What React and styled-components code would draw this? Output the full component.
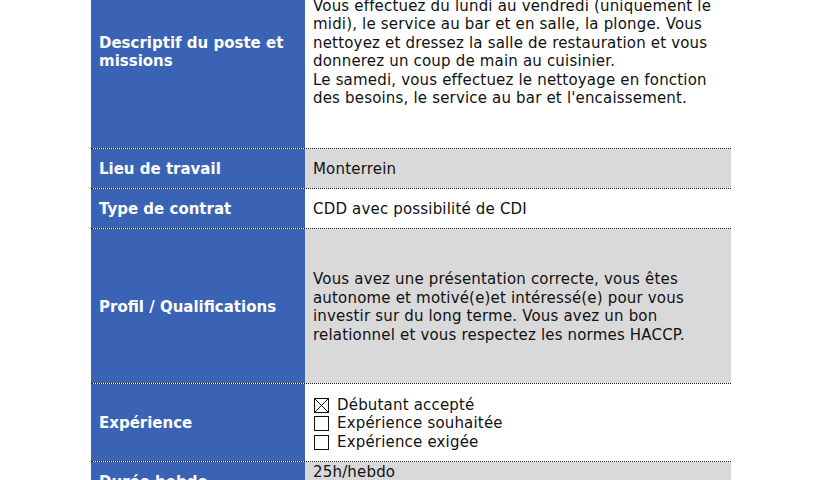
import React from 'react';
import styled, { createGlobalStyle } from 'styled-components';

const GlobalStyle = createGlobalStyle`
  html, body {
    margin: 0;
    padding: 0;
    background: #ffffff;
    overflow: hidden;
  }
  body {
    font-family: 'DejaVu Sans', Verdana, sans-serif;
  }
`;

const Sheet = styled.div`
  width: 640px;
  margin: -46px 0 0 91px;
`;

const Row = styled.div`
  display: grid;
  grid-template-columns: 214px 426px;
  height: ${({ h }) => h}px;
  box-sizing: border-box;
  border-top: ${({ first }) => (first ? 'none' : '1px dotted #1a1a1a')};
`;

const Label = styled.div`
  background: #3a63b6;
  color: #ffffff;
  font-weight: bold;
  font-size: 15px;
  line-height: 18.5px;
  display: flex;
  align-items: center;
  padding: 2px 8px 0;
`;

const Value = styled.div`
  background: ${({ shade }) => (shade ? '#d9d9d9' : '#ffffff')};
  color: #111111;
  font-size: 15px;
  line-height: 18.5px;
  letter-spacing: 0.18px;
  display: flex;
  align-items: ${({ top }) => (top ? 'flex-start' : 'center')};
  padding: ${({ top }) => (top ? '1px 8px 0' : '2px 8px 0')};
  white-space: nowrap;
`;

const Lines = styled.div`
  display: flex;
  flex-direction: column;
`;

const Choice = styled.div`
  display: flex;
  align-items: center;
  gap: 8px;
`;

const Box = styled.span`
  width: 15px;
  height: 15px;
  border: 1px solid #111;
  box-sizing: border-box;
  display: inline-flex;
  margin-left: 1px;
`;

const CheckBox = ({ checked }) => (
  <Box>
    {checked && (
      <svg width="13" height="13" viewBox="0 0 13 13">
        <path d="M0 0 L13 13 M13 0 L0 13" stroke="#111" strokeWidth="1" />
      </svg>
    )}
  </Box>
);

const rows = [
  {
    label: ['Descriptif du poste et', 'missions'],
    h: 194,
    value: [
      'Vous effectuez du lundi au vendredi (uniquement le',
      'midi), le service au bar et en salle, la plonge. Vous',
      'nettoyez et dressez la salle de restauration et vous',
      'donnerez un coup de main au cuisinier.',
      'Le samedi, vous effectuez le nettoyage en fonction',
      "des besoins, le service au bar et l'encaissement.",
    ],
  },
  { label: ['Lieu de travail'], h: 40, value: ['Monterrein'] },
  { label: ['Type de contrat'], h: 40, value: ['CDD avec possibilité de CDI'] },
  {
    label: ['Profil / Qualifications'],
    h: 155,
    value: [
      'Vous avez une présentation correcte, vous êtes',
      'autonome et motivé(e)et intéressé(e) pour vous',
      'investir sur du long terme. Vous avez un bon',
      'relationnel et vous respectez les normes HACCP.',
    ],
  },
];

const choices = [
  { text: 'Débutant accepté', checked: true },
  { text: 'Expérience souhaitée', checked: false },
  { text: 'Expérience exigée', checked: false },
];

export default function App() {
  return (
    <>
      <GlobalStyle />
      <Sheet>
        {rows.map((r, i) => (
          <Row key={r.label[0]} h={r.h} first={i === 0}>
            <Label>
              <Lines>
                {r.label.map((l) => (
                  <span key={l}>{l}</span>
                ))}
              </Lines>
            </Label>
            <Value shade={i % 2 === 1}>
              <Lines>
                {r.value.map((l) => (
                  <span key={l}>{l}</span>
                ))}
              </Lines>
            </Value>
          </Row>
        ))}
        <Row h={78}>
          <Label>Expérience</Label>
          <Value>
            <Lines>
              {choices.map((c) => (
                <Choice key={c.text}>
                  <CheckBox checked={c.checked} />
                  <span>{c.text}</span>
                </Choice>
              ))}
            </Lines>
          </Value>
        </Row>
        <Row h={40}>
          <Label>Durée hebdo</Label>
          <Value shade top>
            <Lines>
              <span>25h/hebdo</span>
              <span>Du lundi au samedi</span>
            </Lines>
          </Value>
        </Row>
      </Sheet>
    </>
  );
}
